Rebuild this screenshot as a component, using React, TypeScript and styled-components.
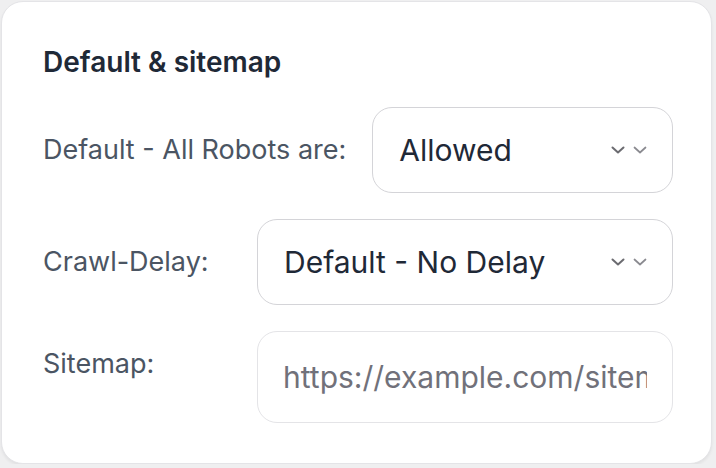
import React from "react";
import styled, { createGlobalStyle } from "styled-components";

const Global = createGlobalStyle`
  html, body { margin: 0; padding: 0; background: #efeff0; }
  body { font-family: Inter, "Noto Sans", sans-serif; }
  * { box-sizing: border-box; }
`;

const Page = styled.div`
  padding: 1px 0 0 1px;
`;

const Card = styled.section`
  width: 711px;
  background: #ffffff;
  border: 1px solid #e4e4e7;
  border-radius: 22px;
  box-shadow: 0 2px 3px rgba(0, 0, 0, 0.06);
  padding: 43px 38px 40px 41px;
  display: flex;
  flex-direction: column;
`;

const Heading = styled.h2`
  margin: 0 0 28px 0;
  font-size: 28px;
  line-height: 34px;
  font-weight: 600;
  color: #1f2937;
`;

const Rows = styled.div`
  display: flex;
  flex-direction: column;
  gap: 26px;
`;

const Row = styled.div<{ $top?: boolean }>`
  display: flex;
  align-items: ${(p) => (p.$top ? "flex-start" : "center")};
  gap: 26px;
`;

const Label = styled.label<{ $top?: boolean }>`
  min-width: 188px;
  font-size: 27px;
  line-height: 32px;
  color: #4b5563;
  white-space: nowrap;
  padding-top: ${(p) => (p.$top ? "17px" : "0")};
`;

const SelectWrap = styled.div`
  position: relative;
  flex: 1;
`;

const Select = styled.select`
  appearance: none;
  -webkit-appearance: none;
  width: 100%;
  height: 86px;
  border: 1.5px solid #d4d4d8;
  border-radius: 20px;
  background: #ffffff;
  padding: 0 70px 0 26px;
  font-family: Inter, "Noto Sans", sans-serif;
  font-size: 30px;
  color: #1f2937;
  outline: none;
`;

const Chevrons = styled.svg`
  position: absolute;
  right: 24px;
  top: 50%;
  transform: translateY(-50%);
  pointer-events: none;
`;

const Input = styled.input`
  flex: 1;
  min-width: 0;
  height: 92px;
  border: 1.5px solid #e4e4e7;
  border-radius: 20px;
  background: #ffffff;
  padding: 0 25px 0 25px;
  font-family: Inter, "Noto Sans", sans-serif;
  font-size: 30px;
  color: #1f2937;
  outline: none;
  &::placeholder {
    color: #71717a;
  }
`;

const ChevronPair = () => (
  <Chevrons width="38" height="10" viewBox="0 0 38 10" fill="none">
    <path d="M1.5 2.5 L7 7.5 L12.5 2.5" stroke="#6b6b70" strokeWidth="2" strokeLinecap="round" strokeLinejoin="round" />
    <path d="M23.5 2.5 L29 7.5 L34.5 2.5" stroke="#8a8a90" strokeWidth="1.7" strokeLinecap="round" strokeLinejoin="round" />
  </Chevrons>
);

export default function App() {
  return (
    <>
      <Global />
      <Page>
        <Card>
          <Heading>Default &amp; sitemap</Heading>
          <Rows>
            <Row>
              <Label>Default - All Robots are:</Label>
              <SelectWrap>
                <Select defaultValue="allowed">
                  <option value="allowed">Allowed</option>
                  <option value="refused">Refused</option>
                </Select>
                <ChevronPair />
              </SelectWrap>
            </Row>
            <Row>
              <Label>Crawl-Delay:</Label>
              <SelectWrap>
                <Select defaultValue="none">
                  <option value="none">Default - No Delay</option>
                  <option value="5">5 Seconds</option>
                  <option value="10">10 Seconds</option>
                </Select>
                <ChevronPair />
              </SelectWrap>
            </Row>
            <Row $top>
              <Label $top>Sitemap:</Label>
              <Input placeholder="https://example.com/sitemap.xml" />
            </Row>
          </Rows>
        </Card>
      </Page>
    </>
  );
}
